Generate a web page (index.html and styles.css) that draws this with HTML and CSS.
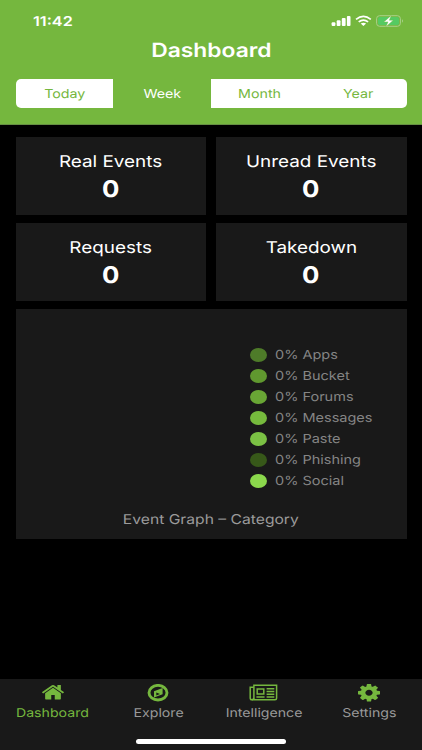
FILE: index.html
```html
<!DOCTYPE html>
<html lang="en">
<head>
<meta charset="utf-8">
<title>Dashboard</title>
<link rel="stylesheet" href="styles.css">
</head>
<body>
<div class="app">
  <header class="header">
    <div class="status">
      <span class="time"><span class="wide">11:42</span></span>
      <svg class="status-icons" viewBox="0 0 74 14" width="74" height="14">
        <g fill="#fff">
          <rect x="0.6" y="8.2" width="3.8" height="3.8" rx="1"/>
          <rect x="5.7" y="6.2" width="3.8" height="5.8" rx="1"/>
          <rect x="10.8" y="4" width="3.8" height="8" rx="1"/>
          <rect x="15.9" y="2" width="3.6" height="10" rx="1"/>
          <path d="M32.400 12.000L29.700 9.500Q32.400 7.800 35.100 9.500Z"/>
        </g>
        <g fill="none" stroke="#fff" stroke-width="1.7">
          <path d="M25 5.300Q32.400 -0.400 39.800 5.300"/>
          <path d="M27.700 7.900Q32.400 4.200 37.100 7.900"/>
        </g>
        <rect x="45.600" y="1.700" width="23.800" height="10.600" rx="3" fill="none" stroke="#a9d08b"/>
        <rect x="47" y="3" width="21" height="8" rx="1.800" fill="#55ca62"/>
        <path d="M71 5.300Q73 7 71 8.700Z" fill="#a9d08b"/>
        <path d="M60.300 1.400L52.800 7.900H57L54.900 12.700L62.300 6.200H58.300Z" fill="#fff" stroke="#75b73e" stroke-width=".4"/>
      </svg>
    </div>
    <h1 class="title"><span class="wide">Dashboard</span></h1>
    <nav class="segments">
      <span class="segment"><span class="wide">Today</span></span>
      <span class="segment active"><span class="wide">Week</span></span>
      <span class="segment"><span class="wide">Month</span></span>
      <span class="segment"><span class="wide">Year</span></span>
    </nav>
  </header>
  <main class="content">
    <section class="stats">
      <div class="card"><span class="label"><span class="wide">Real Events</span></span><b class="value"><span class="wide">0</span></b></div>
      <div class="card"><span class="label"><span class="wide">Unread Events</span></span><b class="value"><span class="wide">0</span></b></div>
      <div class="card"><span class="label"><span class="wide">Requests</span></span><b class="value"><span class="wide">0</span></b></div>
      <div class="card"><span class="label"><span class="wide">Takedown</span></span><b class="value"><span class="wide">0</span></b></div>
    </section>
    <section class="graph">
      <ul class="legend">
        <li><i class="dot apps"></i><span class="wide">0% Apps</span></li>
        <li><i class="dot bucket"></i><span class="wide">0% Bucket</span></li>
        <li><i class="dot forums"></i><span class="wide">0% Forums</span></li>
        <li><i class="dot messages"></i><span class="wide">0% Messages</span></li>
        <li><i class="dot paste"></i><span class="wide">0% Paste</span></li>
        <li><i class="dot phishing"></i><span class="wide">0% Phishing</span></li>
        <li><i class="dot social"></i><span class="wide">0% Social</span></li>
      </ul>
      <p class="caption"><span class="wide">Event Graph – Category</span></p>
    </section>
  </main>
  <footer class="tabbar">
    <div class="tabs">
      <div class="tab current">
        <svg class="icon" width="22" height="18" viewBox="90 169 1612 1600" preserveAspectRatio="none"><path fill="currentColor" d="M1472 992v480q0 26-19 45t-45 19h-384v-384h-256v384h-384q-26 0-45-19t-19-45v-480q0-1 .5-3t.5-3l575-474 575 474q1 2 1 6zm223-69l-62 74q-8 9-21 11h-3q-13 0-21-7l-692-577-692 577q-12 8-24 7-13-2-21-11l-62-74q-8-10-7-23.500t11-21.500l719-599q32-26 76-26t76 26l244 204v-195q0-14 9-23t23-9h192q14 0 23 9t9 23v408l219 182q10 8 11 21.500t-7 23.500z"/></svg>
        <span class="wide">Dashboard</span>
      </div>
      <div class="tab">
        <svg class="icon" width="22" height="18" viewBox="0 0 22 18"><ellipse cx="11" cy="8.700" rx="9" ry="7.300" fill="none" stroke="currentColor" stroke-width="2.900"/><path fill="currentColor" fill-rule="evenodd" d="M15.600 3.900V10.200L7 13.500V7.200ZM9.300 8.500V11.400L13 9.900Z"/></svg>
        <span class="wide">Explore</span>
      </div>
      <div class="tab">
        <svg class="icon" width="29" height="18" viewBox="0 0 29 18"><g fill="none" stroke="currentColor" stroke-width="1.500"><path d="M4.900 1.300H27.600V14.300Q27.600 15.800 26 15.800H3Q4.900 15.600 4.900 14Z"/><path d="M4.900 3.200H1.200V14Q1.200 15.800 3 15.800Q4.900 15.600 4.900 14"/><path d="M8.200 4.900H14.800V10H8.200ZM7.400 12.900H15.600M17.600 4.700H25.300M17.600 7.400H25.300M17.600 10.200H25.300M17.600 12.900H25.300"/></g></svg>
        <span class="wide">Intelligence</span>
      </div>
      <div class="tab">
        <svg class="icon" width="22" height="18" viewBox="0 128 1536 1576" preserveAspectRatio="none"><path fill="currentColor" d="M1024 896q0-106-75-181t-181-75-181 75-75 181 75 181 181 75 181-75 75-181zm512-109v222q0 12-8 23t-20 13l-185 28q-19 54-39 91 35 50 107 138 10 12 10 25t-9 23q-27 37-99 108t-94 71q-12 0-26-9l-138-108q-44 23-91 38-16 136-29 186-7 28-36 28h-222q-14 0-24.500-8.500t-11.500-21.500l-28-184q-49-16-90-37l-141 107q-10 9-25 9-14 0-25-11-126-114-165-168-7-10-7-23 0-12 8-23 15-21 51-66.500t54-70.500q-27-50-41-99l-183-27q-13-2-21-12.500t-8-23.500v-222q0-12 8-23t19-13l186-28q14-46 39-92-40-57-107-138-10-12-10-24 0-10 9-23 26-36 98.500-107.500t94.500-71.500q13 0 26 10l138 107q44-23 91-38 16-136 29-186 7-28 36-28h222q14 0 24.500 8.500t11.500 21.500l28 184q49 16 90 37l142-107q9-9 24-9 13 0 25 10 129 119 165 170 7 8 7 22 0 12-8 23-15 21-51 66.500t-54 70.500q26 50 41 98l183 28q13 2 21 12.500t8 23.500z"/></svg>
        <span class="wide">Settings</span>
      </div>
    </div>
    <div class="home-bar"></div>
  </footer>
</div>
</body>
</html>
```
FILE: styles.css
```css
* { box-sizing: border-box; }
body {
  margin: 0;
  background: #000;
  color: #fff;
  font-family: Inter, "Liberation Sans", sans-serif;
  text-rendering: geometricPrecision;
}
.app {
  width: 422px;
  height: 750px;
  display: flex;
  flex-direction: column;
  overflow: hidden;
}
.wide { display: inline-block; white-space: nowrap; transform: scaleX(1.16); }

.header { height: 125px; background: #75b73e; border-bottom: 1px solid #668f43; }
.status {
  height: 40px;
  padding: 14px 17px 0 33px;
  display: flex;
  justify-content: space-between;
}
.time { padding-top: 1px; font-size: 13.500px; line-height: 14px; font-weight: 600; }
.time .wide { transform: scaleX(1.2); transform-origin: left; }
.title {
  margin: 0;
  height: 39px;
  line-height: 20px;
  font-size: 19.500px;
  font-weight: 600;
  text-align: center;
}
.title .wide { transform: scaleX(1.17); }
.segments {
  height: 29px;
  margin: 0 15.500px;
  display: grid;
  grid-template-columns: repeat(4, 1fr);
  border-radius: 5px;
  overflow: hidden;
}
.segment {
  background: #fff;
  color: #75b73e;
  font-size: 12.300px;
  line-height: 29px;
  text-align: center;
}
.segment.active { background: #75b73e; color: #fff; }

.content { flex: 1; padding: 12px 15.500px 0; }
.stats { display: grid; grid-template-columns: 190.500px 190.500px; gap: 8px 10px; }
.card {
  height: 78px;
  padding-top: 12px;
  background: #191919;
  display: flex;
  flex-direction: column;
  align-items: center;
}
.label { font-size: 16.300px; line-height: 24px; }
.value { font-size: 23px; line-height: 32px; font-weight: 700; }
.value .wide { transform: scaleX(1.12); }
.graph { height: 230px; margin-top: 8px; background: #191919; padding-top: 34px; }
.legend { list-style: none; margin: 0; padding: 0 0 0 234.500px; }
.legend li {
  height: 21px;
  display: flex;
  align-items: center;
  gap: 8px;
  color: #858585;
  font-size: 12.500px;
}
.legend .wide { transform-origin: left; padding-top: 3px; }
.dot { width: 17px; height: 14px; border-radius: 50%; margin-top: 2px; }
.apps { background: #4e7b29; }
.bucket { background: #60982f; }
.forums { background: #69a635; }
.messages { background: #76ba3d; }
.paste { background: #7bc144; }
.phishing { background: #375819; }
.social { background: #8bd84c; }
.caption { margin: 20px 0 0; text-align: center; color: #9b9b9b; font-size: 13.500px; line-height: 20px; }

.tabbar { height: 71px; background: #191919; }
.tabs { display: grid; grid-template-columns: repeat(4, 105.500px); padding-top: 5px; height: 59.500px; }
.tab {
  display: flex;
  flex-direction: column;
  align-items: center;
  color: #999;
  font-size: 12.200px;
  line-height: 22px;
}
.icon { color: #75b73e; display: block; }
.tab.current { color: #75b73e; }
.home-bar { width: 150px; height: 5px; border-radius: 3px; background: #fff; margin: 0 auto; }
```
